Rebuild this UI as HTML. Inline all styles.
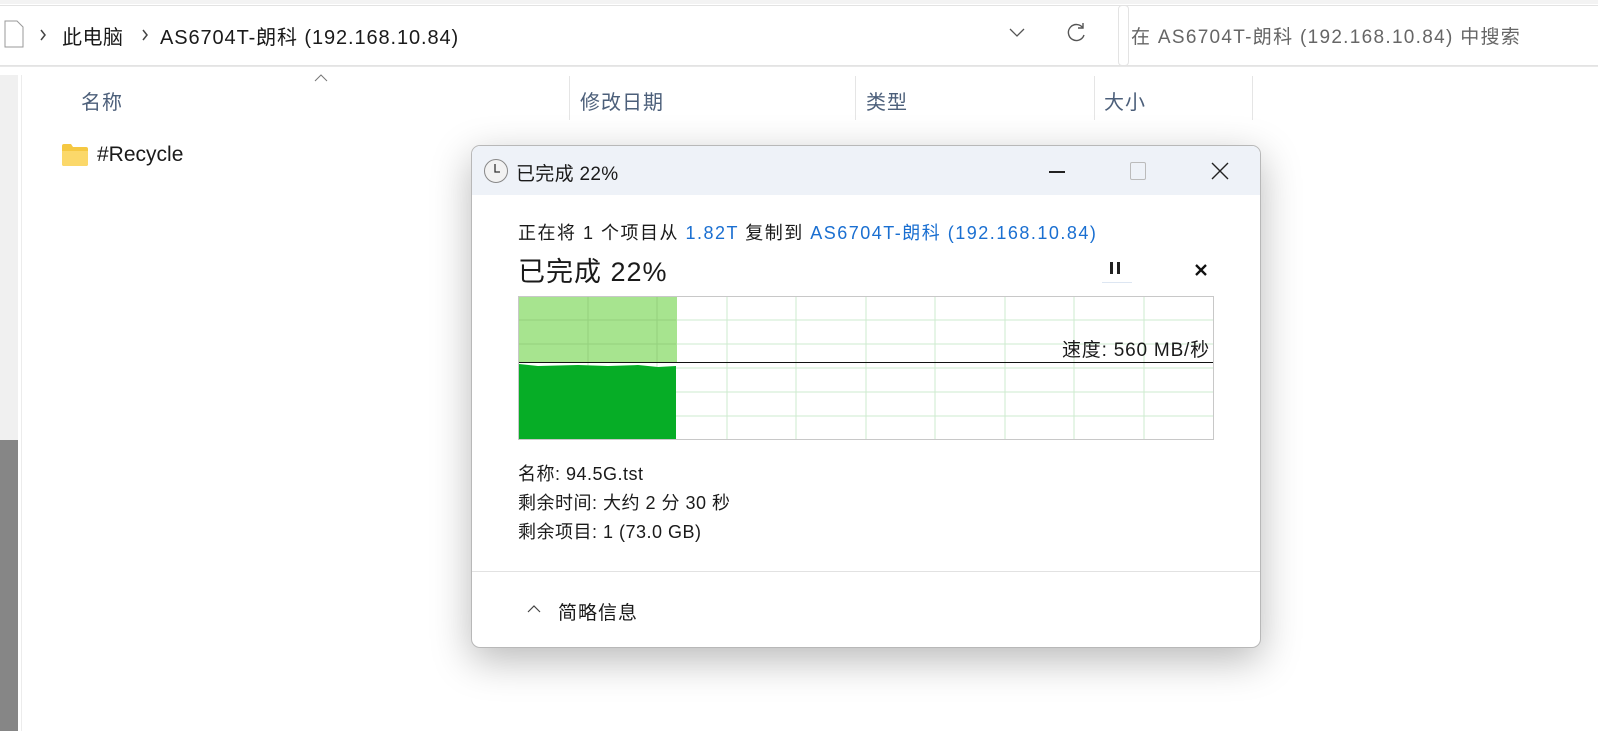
<!DOCTYPE html>
<html><head><meta charset="utf-8"><style>
body{margin:0;width:1598px;height:731px;background:#fff;position:relative;overflow:hidden;font-family:"Liberation Sans","Noto Sans CJK SC",sans-serif;color:#1a1a1a}
.a{position:absolute;white-space:nowrap}
</style></head><body>
<div class="a" style="left:0;top:0;width:1598px;height:4px;background:#f3f3f3"></div>
<div class="a" style="left:-2px;top:5px;width:1130px;height:59px;border:1px solid #e3e3e3;border-left:none;border-radius:0 4px 4px 0"></div>
<div class="a" style="left:1118px;top:5px;width:490px;height:59px;border:1px solid #e3e3e3;border-radius:4px"></div>
<div class="a" style="left:0;top:66px;width:1598px;height:1px;background:#e8e8e8"></div>
<svg class="a" style="left:4px;top:20px" width="20" height="28"><path d="M1 1H13L19 7V27H1Z" fill="#fff" stroke="#999"/></svg>
<svg class="a" style="left:39px;top:29px" width="8" height="12"><path d="M2 1L6 6L2 11" fill="none" stroke="#444" stroke-width="1.5"/></svg>
<div class="a" style="left:62px;top:21px;font-size:20px;letter-spacing:.5px">此电脑</div>
<svg class="a" style="left:141px;top:29px" width="8" height="12"><path d="M2 1L6 6L2 11" fill="none" stroke="#444" stroke-width="1.5"/></svg>
<div class="a" style="left:160px;top:21px;font-size:20px;letter-spacing:.9px">AS6704T-朗科 (192.168.10.84)</div>
<svg class="a" style="left:1008px;top:27px" width="18" height="12"><path d="M2 2L9 9L16 2" fill="none" stroke="#555" stroke-width="1.3"/></svg>
<svg class="a" style="left:1066px;top:21px" width="22" height="22"><path d="M17 7A8 8 0 1 0 18 14" fill="none" stroke="#555" stroke-width="1.4"/><path d="M17 2V7H12" fill="none" stroke="#555" stroke-width="1.4"/></svg>
<div class="a" style="left:1131px;top:22px;font-size:19px;color:#666;letter-spacing:1.3px">在 AS6704T-朗科 (192.168.10.84) 中搜索</div>
<div class="a" style="left:0;top:75px;width:18px;height:365px;background:#f0f0f0"></div>
<div class="a" style="left:0;top:440px;width:18px;height:291px;background:#868686"></div>
<div class="a" style="left:21px;top:75px;width:1px;height:656px;background:#ececec"></div>
<svg class="a" style="left:314px;top:74px" width="14" height="8"><path d="M1 7L7 1L13 7" fill="none" stroke="#777"/></svg>
<div class="a" style="left:81px;top:86px;font-size:20px;color:#4c5f7a;letter-spacing:1px">名称</div>
<div class="a" style="left:569px;top:76px;width:1px;height:44px;background:#e5e5e5"></div>
<div class="a" style="left:580px;top:86px;font-size:20px;color:#4c5f7a;letter-spacing:1px">修改日期</div>
<div class="a" style="left:855px;top:76px;width:1px;height:44px;background:#e5e5e5"></div>
<div class="a" style="left:866px;top:86px;font-size:20px;color:#4c5f7a;letter-spacing:1px">类型</div>
<div class="a" style="left:1094px;top:76px;width:1px;height:44px;background:#e5e5e5"></div>
<div class="a" style="left:1104px;top:86px;font-size:20px;color:#4c5f7a;letter-spacing:1px">大小</div>
<div class="a" style="left:1252px;top:76px;width:1px;height:44px;background:#e5e5e5"></div>
<svg class="a" style="left:62px;top:144px" width="26" height="22"><path d="M0 2Q0 0 2 0H9L11 3H24Q26 3 26 5V20Q26 22 24 22H2Q0 22 0 20Z" fill="#f5c842"/><path d="M0 7H26V20Q26 22 24 22H2Q0 22 0 20Z" fill="#fbd86a"/></svg>
<div class="a" style="left:97px;top:143px;font-size:21px">#Recycle</div>

<div class="a" style="left:471px;top:145px;width:788px;height:501px;border:1px solid #b8b8b8;border-radius:9px;background:#fff;overflow:hidden;box-shadow:0 12px 40px rgba(0,0,0,.28)">
 <div class="a" style="left:0;top:0;width:788px;height:49px;background:#eef2f8"></div>
 <svg class="a" style="left:11px;top:12px" width="26" height="26"><circle cx="13" cy="13" r="11.5" fill="#f2f2f2" stroke="#888"/><path d="M12 6V14H17" fill="none" stroke="#333" stroke-width="1.3"/></svg>
 <div class="a" style="left:44px;top:13px;font-size:19px;letter-spacing:.3px">已完成 22%</div>
 <div class="a" style="left:577px;top:25px;width:16px;height:1.5px;background:#222"></div>
 <div class="a" style="left:658px;top:16px;width:14px;height:16px;border:1px solid #bbb;border-radius:2px"></div>
 <svg class="a" style="left:738px;top:15px" width="20" height="20"><path d="M2 2L18 18M18 2L2 18" stroke="#222" stroke-width="1.4"/></svg>
 <div class="a" style="left:46px;top:73px;font-size:18px;letter-spacing:1.5px">正在将 1 个项目从 <span style="color:#1a6fd1">1.82T</span> 复制到 <span style="color:#1a6fd1">AS6704T-朗科 (192.168.10.84)</span></div>
 <div class="a" style="left:46px;top:104px;font-size:27px;letter-spacing:1px">已完成 22%</div>
 <div class="a" style="left:638px;top:116px;width:3px;height:12px;background:#222"></div>
 <div class="a" style="left:645px;top:116px;width:3px;height:12px;background:#222"></div>
 <div class="a" style="left:630px;top:136px;width:30px;height:1px;background:#dde6f2"></div>
 <svg class="a" style="left:722px;top:117px" width="14" height="14"><path d="M2 2L12 12M12 2L2 12" stroke="#111" stroke-width="2.3"/></svg>
 <svg class="a" style="left:46px;top:150px" width="697" height="145">
  <rect x="0.5" y="0.5" width="695" height="143" fill="#fff" stroke="#c8c8c8"/>
  <g stroke="#cdebcf" stroke-width="1">
   <path d="M70 1V143M139 1V143M209 1V143M278 1V143M348 1V143M417 1V143M487 1V143M556 1V143M626 1V143"/>
   <path d="M1 24H695M1 48H695M1 72H695M1 96H695M1 120H695"/>
  </g>
  <rect x="1" y="1" width="158" height="65" fill="#a7e48f"/>
  <path d="M1 68L20 70L60 69L90 70L120 69L140 71L158 70V143H1Z" fill="#06ad26"/>
  <g stroke="#94d17e"><path d="M70 1V66M139 1V66M1 24H158M1 48H158"/></g>
  <path d="M1 66.5H695" stroke="#111" stroke-width="1"/>
 </svg>
 <div class="a" style="left:590px;top:189px;font-size:19px;letter-spacing:.8px">速度: 560 MB/秒</div>
 <div class="a" style="left:46px;top:314px;font-size:18px;line-height:29px;letter-spacing:.5px">名称: 94.5G.tst<br>剩余时间: 大约 2 分 30 秒<br>剩余项目: 1 (73.0 GB)</div>
 <div class="a" style="left:0;top:425px;width:788px;height:1px;background:#e2e2e2"></div>
 <svg class="a" style="left:55px;top:458px" width="14" height="9"><path d="M1 8L7 2L13 8" fill="none" stroke="#444" stroke-width="1.2"/></svg>
 <div class="a" style="left:86px;top:452px;font-size:19px;letter-spacing:1px">简略信息</div>
</div>
</body></html>
